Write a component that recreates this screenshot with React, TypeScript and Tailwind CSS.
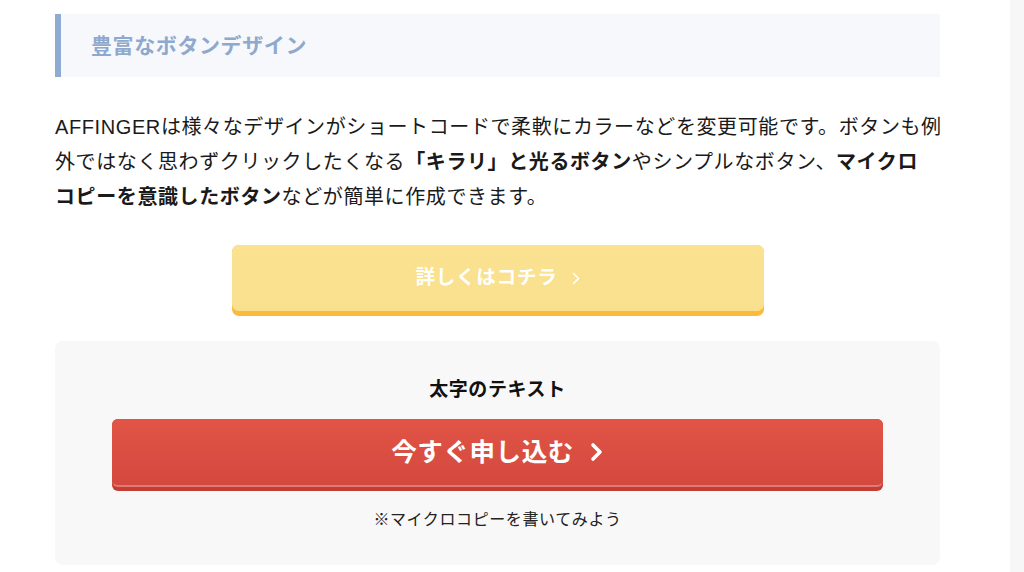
import React from "react";

const font = { fontFamily: '"Liberation Sans", "Noto Sans CJK JP", sans-serif' };

export default function App() {
  return (
    <div className="flex w-[1024px] h-[572px] bg-white overflow-hidden" style={font}>
      <main className="w-[1010px] pl-[55px] pt-[14px] bg-white">
        <div className="w-[885px]">
          <div className="h-[63px] border-l-[6px] border-[#8eacd3] bg-[#f6f8fb] pl-[30px] flex items-center">
            <h2 className="text-[21px] font-bold text-[#8ea9cd] tracking-[0.6px] leading-none">豊富なボタンデザイン</h2>
          </div>

          <p className="mt-[33px] text-[20px] leading-[35px] tracking-[0.6px] text-[#1a1a1a] whitespace-nowrap">
            AFFINGERは様々なデザインがショートコードで柔軟にカラーなどを変更可能です。ボタンも例
            <br />
            外ではなく思わずクリックしたくなる<b>「キラリ」と光るボタン</b>やシンプルなボタン、<b>マイクロ</b>
            <br />
            <b>コピーを意識したボタン</b>などが簡単に作成できます。
          </p>

          <div className="mt-[30px] flex justify-center">
            <div className="w-[532px] h-[71px] rounded-[7px] bg-[#fbba3c] pb-[5px]">
              <div className="h-[66px] rounded-[7px] bg-gradient-to-b from-[#fbe290] to-[#f9e08e] flex items-center justify-center gap-[14px] text-white font-bold text-[19.5px] tracking-[0.8px]">
                <span>詳しくはコチラ</span>
                <svg width="8" height="13" viewBox="0 0 8 13" fill="none">
                  <path d="M1.5 1.5 L6.5 6.5 L1.5 11.5" stroke="white" strokeWidth="1.6" strokeLinecap="round" strokeLinejoin="round" />
                </svg>
              </div>
            </div>
          </div>

          <div className="mt-[25px] h-[224px] rounded-[8px] bg-[#f8f8f8] px-[57px] pt-[35px] flex flex-col items-center">
            <div className="text-[19px] font-bold leading-[28px] tracking-[0.6px] text-[#111]">太字のテキスト</div>
            <div className="mt-[15px] w-[771px] h-[72px] rounded-[6px] bg-[#c43d34] pb-[4px]">
              <div className="h-[68px] rounded-[6px] bg-gradient-to-b from-[#e15446] to-[#d4493f] border-b-2 border-[#e07a72] flex items-center justify-center gap-[16px] text-white font-bold text-[25.5px] tracking-[0.6px]">
                <span>今すぐ申し込む</span>
                <svg width="14" height="20" viewBox="0 0 14 20" fill="none">
                  <path d="M3 3 L10 10 L3 17" stroke="white" strokeWidth="3.6" strokeLinecap="round" strokeLinejoin="round" />
                </svg>
              </div>
            </div>
            <div className="mt-[17px] text-[16px] leading-[24px] tracking-[0.6px] text-[#222]">※マイクロコピーを書いてみよう</div>
          </div>
        </div>
      </main>
      <aside className="flex-1 bg-[#f7f7f7]" />
    </div>
  );
}
